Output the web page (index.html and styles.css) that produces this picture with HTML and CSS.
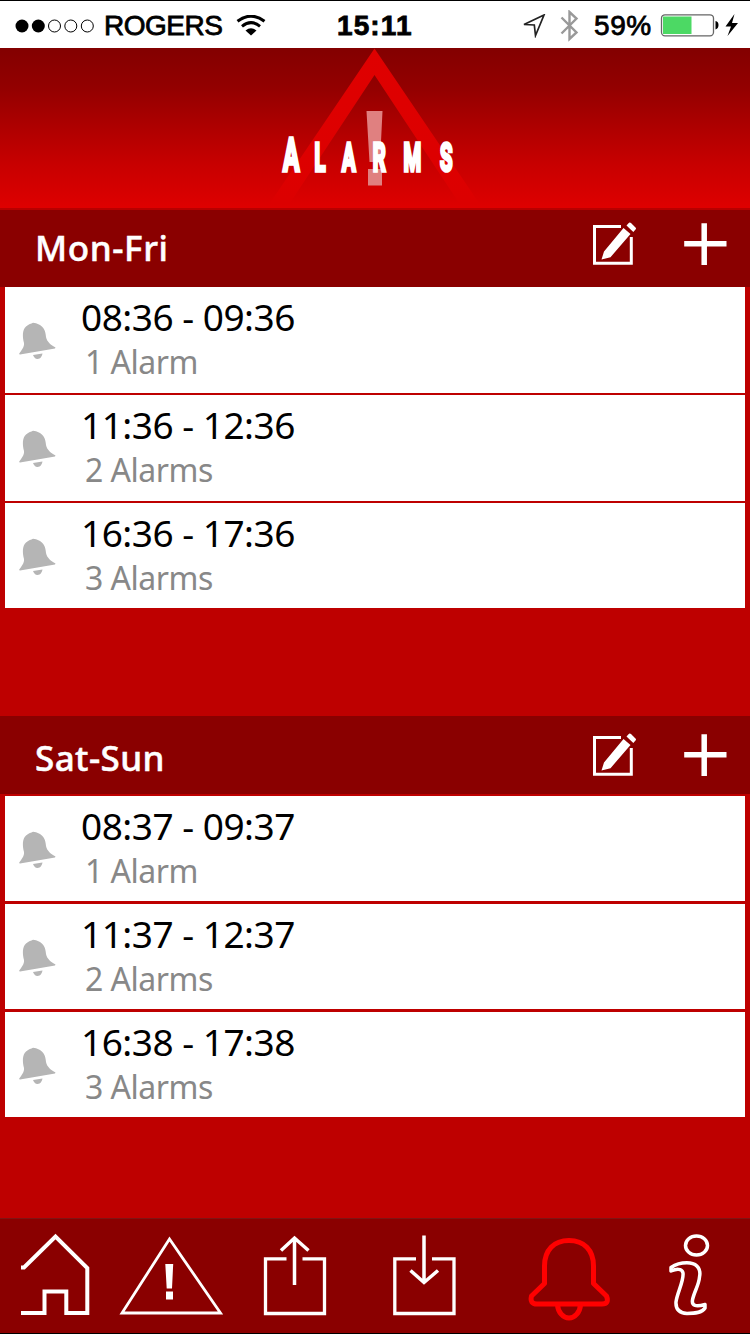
FILE: index.html
```html
<!DOCTYPE html>
<html lang="en">
<head>
<meta charset="utf-8">
<title>Alarms</title>
<link rel="stylesheet" href="styles.css">
</head>
<body>
<svg class="defs" width="0" height="0">
  <symbol id="bell" viewBox="0 0 37 37">
    <path d="M0 32C2.500 28 5.500 25 5 21C3.500 15 3 8 7 4.500C10 2 12 2 14 .8C16 1 18 1.500 20 2.500C25 5 26.500 9 27 15C28 20 32 23 36.500 25.500L36 26.500L1 32.500Z"/>
    <path d="M14 33L23.500 31.500C23 34 21.500 37 18.500 37C16 37 15 35 14 33Z"/>
  </symbol>
  <symbol id="edit" viewBox="0 0 46 46">
    <path d="M28 5.500H1.500V42.300H38.300V16" fill="none" stroke="#fff" stroke-width="3"/>
    <path d="M8.500 38.500L11 30.500L30.500 7L37.500 13L17.500 36.200Z M33.500 4.500L36 1.800Q37 1 38 2L42.500 6.500Q43.500 7.500 42.500 8.500L40.300 11Z" fill="#fff"/>
  </symbol>
  <symbol id="plus" viewBox="0 0 43 42">
    <path d="M20.200 .3V42M.2 20.700H42.500" fill="none" stroke="#fff" stroke-width="5.500"/>
  </symbol>
</svg>
<div class="screen">
  <div class="status">
    <svg class="dots" width="82" height="20" viewBox="0 0 82 20">
      <circle cx="8" cy="10" r="6.500"/><circle cx="24.300" cy="10" r="6.500"/>
      <g fill="none" stroke="#000" stroke-width="1"><circle cx="40.500" cy="10" r="6"/><circle cx="56.800" cy="10" r="6"/><circle cx="73.300" cy="10" r="6"/></g>
    </svg>
    <span class="carrier">ROGERS</span>
    <svg class="wifi" width="30" height="22" viewBox="0 0 30 22">
      <g fill="none" stroke="#000" stroke-width="3"><path d="M1.500 6.300Q15-4 28.500 6.300"/><path d="M6 11.300Q15 4 24 11.300"/></g>
      <path d="M9.500 15.500Q15 11 20.500 15.500L15 20.500Z"/>
    </svg>
    <span class="clock">15:11</span>
    <svg class="locate" width="24" height="24" viewBox="0 0 24 24"><path d="M2 10.500L22 1L13.500 21.500L12.300 11Z" fill="none" stroke="#222" stroke-width="1.700"/></svg>
    <svg class="bluetooth" width="19" height="32" viewBox="0 0 19 32"><path d="M1.500 7.500L16.500 22.500L9.500 29V2L16.500 8.500L1.500 23.500" fill="none" stroke="#999" stroke-width="2.400"/></svg>
    <span class="percent">59%</span>
    <svg class="battery" width="78" height="24" viewBox="0 0 78 24">
      <rect x="1.500" y=".8" width="52" height="21" rx="3.500" fill="#fff" stroke="#666" stroke-width="1.300"/>
      <rect x="3" y="2.500" width="28.500" height="17.500" fill="#4cd964"/>
      <path d="M55.500 7Q58.500 7.500 58.500 11T55.500 15.500Z"/>
      <path d="M74.500 0L65.500 12.500H71L67.500 22L78 9H72Z"/>
    </svg>
  </div>

  <div class="hero">
    <svg width="750" height="160" viewBox="0 0 750 160">
      <defs><linearGradient id="fade" x1="0" y1="0" x2="0" y2="1"><stop offset="0" stop-color="#df0000"/><stop offset="1" stop-color="#dc0000"/></linearGradient></defs>
      <path d="M374.500 .5L479 155H459L374.500 27L290 155H270Z" fill="url(#fade)"/>
      <path d="M366.500 63H382.500L380 114H369.500ZM368 121H382V137.500H368Z" fill="#e08080"/>
      <g class="title" transform="translate(0 123) scale(.52 1)">
        <text class="cap" x="544">A</text>
        <text class="small" x="605 657.500 717 776 846">LARMS</text>
      </g>
    </svg>
  </div>

  <section class="group">
    <header class="group-head"><h2>Mon-Fri</h2><svg class="edit"><use href="#edit"/></svg><svg class="plus"><use href="#plus"/></svg></header>
    <ul class="list">
      <li class="row"><svg class="bell"><use href="#bell"/></svg><div><p class="time">08:36 - 09:36</p><p class="count">1 Alarm</p></div></li>
      <li class="row"><svg class="bell"><use href="#bell"/></svg><div><p class="time">11:36 - 12:36</p><p class="count">2 Alarms</p></div></li>
      <li class="row"><svg class="bell"><use href="#bell"/></svg><div><p class="time">16:36 - 17:36</p><p class="count">3 Alarms</p></div></li>
    </ul>
  </section>

  <section class="group weekend">
    <header class="group-head"><h2>Sat-Sun</h2><svg class="edit"><use href="#edit"/></svg><svg class="plus"><use href="#plus"/></svg></header>
    <ul class="list">
      <li class="row"><svg class="bell"><use href="#bell"/></svg><div><p class="time">08:37 - 09:37</p><p class="count">1 Alarm</p></div></li>
      <li class="row"><svg class="bell"><use href="#bell"/></svg><div><p class="time">11:37 - 12:37</p><p class="count">2 Alarms</p></div></li>
      <li class="row"><svg class="bell"><use href="#bell"/></svg><div><p class="time">16:38 - 17:38</p><p class="count">3 Alarms</p></div></li>
    </ul>
  </section>

  <nav class="tabs">
    <svg class="tab home" width="70" height="84" viewBox="20 1233 70 84"><path d="M21 1267.500H24L55.500 1236.500L87.300 1268V1313H66.300V1291.500H44.500V1313H21" stroke-width="4"/></svg>
    <svg class="tab warning" width="104" height="84" viewBox="119 1233 104 84"><path d="M169.500 1239L220.500 1313H122Z" stroke-width="2.800"/><path class="solid" d="M165.300 1264H173.200L172 1288.500H166.700ZM166 1291.500H173V1299.500H166Z"/></svg>
    <svg class="tab share" width="64" height="84" viewBox="263 1233 64 84"><path d="M286.500 1258.800H265.500V1313.500H324.500V1258.800H302.500" stroke-width="3.300"/><path d="M294.500 1285V1238M281 1250.500L294.500 1238L308.500 1250.500" stroke-width="3.500"/></svg>
    <svg class="tab save" width="64" height="84" viewBox="393 1233 64 84"><path d="M416 1258.800H394.800V1313.500H454V1258.800H432" stroke-width="3.300"/><path d="M424 1235.500V1282.500M410.500 1270.500L424 1282.500L438 1270.500" stroke-width="3.500"/></svg>
    <svg class="tab alarms" width="84" height="88" viewBox="527 1235 84 88"><path d="M544.500 1283.500V1266C544.500 1250 554 1240.500 569 1240.500S593.500 1250 593.500 1266V1283.500L606.500 1296Q609.500 1304 602 1304H537Q529.500 1304 531.500 1296ZM557.500 1305C558 1312 563 1318 569 1318S580 1312 580.500 1305" stroke-width="5"/></svg>
    <svg class="tab info" width="44" height="84" viewBox="667 1233 44 84"><ellipse cx="696.500" cy="1245.500" rx="11" ry="9.500" stroke-width="3.500"/><path d="M671 1271V1267.500C677 1263.500 684 1262.500 690 1263C698 1264 701 1270 699.500 1277C699 1285 694 1292 692.500 1300C691.500 1306 696 1307 705 1304.500V1308C702 1313 695 1313.500 687 1313.500C680 1313 675.500 1310 676 1302C677 1293 684 1281 683 1273C682 1268 676 1269 671 1271Z" stroke-width="3.500" stroke-linejoin="round"/></svg>
  </nav>
</div>
</body>
</html>
```

FILE: styles.css
```css
* { box-sizing: border-box; }
body, h2, p, ul { margin: 0; padding: 0; }
body { font-family: "Noto Sans", "Open Sans", sans-serif; background: #be0000; }
svg { display: block; flex: none; }
.defs { position: absolute; }
.screen { width: 750px; height: 1334px; display: flex; flex-direction: column; overflow: hidden; background: #be0000; border-bottom: 1px solid #000; }

.status { height: 48px; flex: none; display: flex; align-items: center; padding: 2px 0 0 14px; background: #fff; border-top: 1px solid #000; font-family: "Liberation Sans", Arial, sans-serif; color: #000; white-space: nowrap; -webkit-text-stroke: .8px #000; }
.carrier { width: 132px; margin-left: 8px; font-size: 28px; letter-spacing: -.5px; }
.wifi { margin-left: 0; }
.clock { width: 84px; margin-left: 71px; font-weight: bold; font-size: 28px; letter-spacing: 1.1px; }
.locate { margin-left: 101px; }
.bluetooth { margin-left: 14px; }
.percent { width: 60px; margin-left: 15px; font-size: 28px; letter-spacing: .6px; }
.battery { margin-left: 6px; }

.hero { height: 162px; flex: none; background: linear-gradient(#830000, #930000 25%, #c80000 73%, #de0000); border-bottom: 2px solid #b80000; }
.title { fill: #fff; stroke: #fff; stroke-width: 3.600; font-family: "Roboto", sans-serif; font-weight: bold; }
.cap { font-size: 47px; }
.small { font-size: 39px; }

.group { flex: none; }
.weekend { margin-top: 107px; }
.group-head { height: 77px; display: flex; align-items: center; padding: 0 23px 0 35px; background: #8a0000; }
.weekend .group-head { height: 78px; padding-top: 9px; }
.group-head h2 { flex: 1; padding-bottom: 3px; font-size: 35px; font-weight: 500; letter-spacing: .6px; color: #fff; -webkit-text-stroke: .5px #fff; }
.weekend h2 { padding-bottom: 5px; letter-spacing: .4px; }
.edit { width: 46px; height: 46px; margin: -9px 45px 0 0; }
.plus { width: 43px; height: 42px; margin-top: -9px; }
.list { display: grid; grid-auto-rows: 106px; gap: 2px; padding: 0 5px; list-style: none; }
.list .row:last-child { height: 105px; }
.weekend .list { grid-auto-rows: 105px; gap: 3px; padding-top: 2px; }
.row { display: flex; align-items: flex-start; padding-left: 14px; background: #fff; white-space: nowrap; }
.bell { width: 37px; height: 37px; margin: 35px 25px 0 0; fill: #b5b5b5; }
.time { height: 51px; padding-top: 5px; line-height: 50px; font-size: 37px; letter-spacing: -.5px; color: #000; }
.count { padding-left: 4px; line-height: 48px; font-size: 32px; letter-spacing: -.5px; color: #888; }

.tabs { height: 115px; margin-top: auto; flex: none; display: flex; align-items: flex-start; padding: 14px 0 0 20px; background: #8a0000; border-top: 1px solid #801414; }
.tab { fill: none; stroke: #fff; }
.solid { fill: #fff; stroke: none; }
.warning { margin-left: 29px; }
.share { margin-left: 40px; }
.save { margin-left: 66px; }
.alarms { margin: 2px 0 0 70px; stroke: #f00; stroke-linejoin: round; }
.info { margin-left: 56px; }
```
